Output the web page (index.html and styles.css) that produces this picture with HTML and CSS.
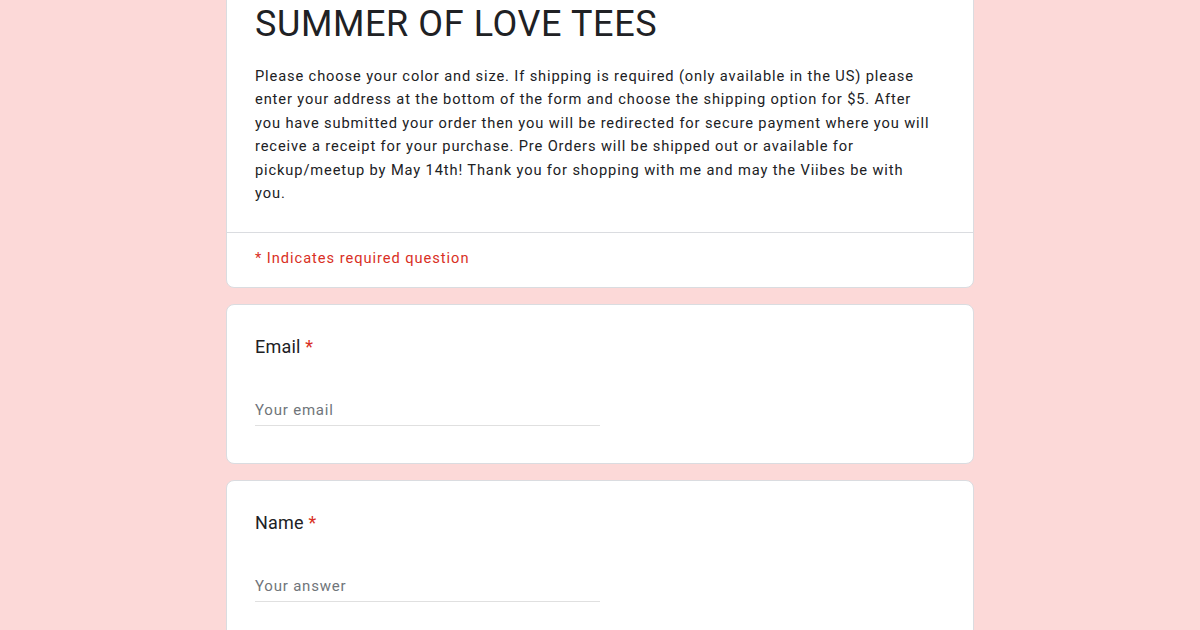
FILE: index.html
```html
<!DOCTYPE html>
<html>
<head>
<meta charset="utf-8">
<link rel="stylesheet" href="styles.css">
</head>
<body>
<div class="page">
  <div class="card header-card">
    <div class="header-main">
      <h1 class="title">SUMMER OF LOVE TEES</h1>
      <p class="desc">Please choose your color and size. If shipping is required (only available in the US) please enter your address at the bottom of the form and choose the shipping option for $5. After you have submitted your order then you will be redirected for secure payment where you will receive a receipt for your purchase. Pre Orders will be shipped out or available for pickup/meetup by May 14th! Thank you for shopping with me and may the Viibes be with you.</p>
    </div>
    <div class="header-foot">* Indicates required question</div>
  </div>
  <div class="card question">
    <div class="q-label">Email <span class="req">*</span></div>
    <div class="q-input">Your email</div>
  </div>
  <div class="card question">
    <div class="q-label">Name <span class="req">*</span></div>
    <div class="q-input">Your answer</div>
  </div>
</div>
</body>
</html>
```

FILE: styles.css
```css
html, body {
  margin: 0;
  padding: 0;
  background: #fcd9d8;
  font-family: Roboto, "Liberation Sans", Arial, sans-serif;
  color: #202124;
}
.page {
  width: 748px;
  margin: -23px auto 0;
  display: flex;
  flex-direction: column;
  gap: 16px;
}
.card {
  background: #ffffff;
  border: 1px solid #dadce0;
  border-radius: 8px;
  box-sizing: border-box;
}
.header-main {
  padding: 24px 28px 27px;
  border-bottom: 1px solid #dadce0;
}
.title {
  margin: 0;
  font-weight: 400;
  font-size: 36px;
  line-height: 44px;
  color: #202124;
  letter-spacing: 0.6px;
}
.desc {
  margin: 19px 0 0;
  max-width: 678px;
  font-size: 14.67px;
  line-height: 23.4px;
  letter-spacing: 0.87px;
  color: #202124;
}
.header-foot {
  padding: 15px 28px 19px;
  font-size: 14.67px;
  line-height: 20px;
  letter-spacing: 0.95px;
  color: #d93025;
}
.question {
  padding: 30px 28px 37px;
}
.q-label {
  font-size: 18px;
  line-height: 24px;
  color: #202124;
  letter-spacing: 0.2px;
}
.req {
  color: #d93025;
}
.q-input {
  margin-top: 41px;
  width: 345px;
  font-size: 15px;
  line-height: 20px;
  letter-spacing: 0.8px;
  color: #70757a;
  padding-bottom: 5px;
  border-bottom: 1px solid #e0e0e0;
}
```
